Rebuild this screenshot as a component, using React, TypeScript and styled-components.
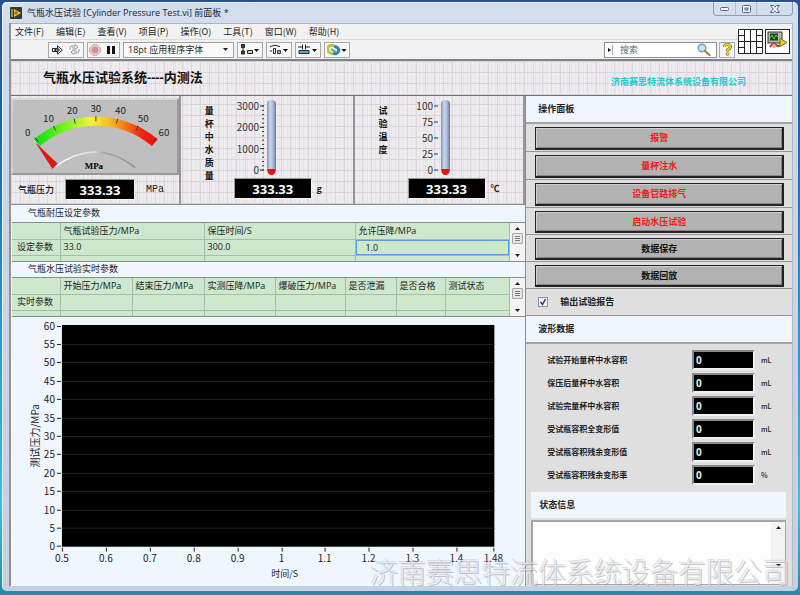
import React from "react";
import styled, { createGlobalStyle, css } from "styled-components";

const cjk = `"Noto Sans CJK SC", "Noto Sans", sans-serif`;
const latin = `"Open Sans", "Noto Sans CJK SC", sans-serif`;

const Global = createGlobalStyle`
  *, *::before, *::after { box-sizing: border-box; }
  body { margin: 0; font: 9px/12px ${cjk}; color: #222; }
  button, input, select, textarea { font: inherit; color: inherit; margin: 0; padding: 0; border-radius: 0; }
  svg { display: block; }
`;

const gridPaper = css`
  background-color: #efecef;
  background-image:
    repeating-linear-gradient(90deg, #dcd8dd 0 1px, transparent 1px 9px),
    repeating-linear-gradient(0deg, #d8d4d9 0 1px, transparent 1px 11px),
    repeating-linear-gradient(90deg, #e8e4e8 0 1px, transparent 1px 4px);
`;

const Desktop = styled.div`
  min-height: 100vh;
  display: flex;
  padding: 2px 2px 4px;
  background: linear-gradient(180deg, #2c4f8c 0, #1c63b4 20%, #2c9ad8 60%, #3fc0e0 85%, #2a86a8 100%);
`;

const Frame = styled.div`
  flex: 1;
  min-width: 0;
  display: flex;
  flex-direction: column;
  padding: 0 5px 5px 7px;
  border-radius: 5px;
  background: linear-gradient(180deg, #d3dfec 0, #cbd6e5 30%, #c5d0e0 100%);
  box-shadow: inset 1px 1px 0 #eef4fb;
`;

const TitleBar = styled.header`
  height: 21px;
  display: flex;
  align-items: center;
  gap: 5px;
  padding-left: 1px;
`;

const Title = styled.h1`
  margin: 0;
  flex: 1;
  font: 400 9px/20px ${latin};
  color: #1c2430;
`;

const WindowButtons = styled.div`
  align-self: flex-start;
  display: grid;
  grid-template-columns: 21px 21px 36px;
  height: 14px;
  border: 1px solid #8e9cb2;
  border-top: 0;
  border-radius: 0 0 4px 4px;
`;

const WindowButton = styled.button`
  display: flex;
  align-items: center;
  justify-content: center;
  border: 0;
  background: transparent;
  & + & { border-left: 1px solid #b4c0d2; }
`;

const Content = styled.div`
  flex: 1;
  display: flex;
  flex-direction: column;
  border-left: 2px solid #929298;
  border-right: 1px solid #b4bac4;
  background: #dedede;
`;

const Bars = styled.div`
  display: grid;
  grid-template-columns: 1fr auto;
  background: #f2f2f3;
  border-top: 1px solid #a8b4c4;
  border-bottom: 2px solid #828084;
`;

const BarRows = styled.div`
  display: grid;
  grid-template-rows: 16px 19px;
`;

const MenuBar = styled.nav`
  display: flex;
  gap: 12px;
  padding-left: 4px;
  border-bottom: 1px solid #dcdcdc;
`;

const MenuItem = styled.button`
  border: 0;
  background: transparent;
  line-height: 14px;
  white-space: nowrap;
`;

const Toolbar = styled.div`
  display: flex;
  align-items: center;
  gap: 3px;
  padding-left: 37px;
`;

const ToolGroup = styled.div`
  display: flex;
  height: 16px;
  border: 1px solid #a9a9ab;
  background: #f6f6f6;
`;

const Tool = styled.button<{ $w: number }>`
  width: ${(p) => p.$w}px;
  display: flex;
  align-items: center;
  justify-content: center;
  border: 0;
  background: transparent;
`;

const FontBox = styled.label`
  width: 111px;
  height: 16px;
  display: flex;
  align-items: center;
  border: 1px solid #a0a0a2;
  background: #fafafa;
  padding-right: 5px;
`;

const FontSelect = styled.select`
  appearance: none;
  flex: 1;
  min-width: 0;
  border: 0;
  background: transparent;
  padding-left: 4px;
  height: 14px;
  font: 400 9px/14px ${latin};
`;

const Search = styled.label`
  display: flex;
  align-items: center;
  width: 113px;
  height: 16px;
  margin-left: auto;
  padding: 0 5px 0 2px;
  gap: 4px;
  border: 1px solid #8e8e90;
  background: #fff;
`;

const SearchInput = styled.input`
  flex: 1;
  min-width: 0;
  height: 14px;
  border: 0;
  outline: 0;
  background: transparent;
  &::placeholder { color: #666; opacity: 1; }
`;

const Help = styled(ToolGroup)`
  margin-right: 3px;
  margin-left: -1px;
`;

const ViIcons = styled.div`
  display: flex;
  align-items: center;
  gap: 2px;
  padding-right: 2px;
`;

const Banner = styled.div`
  height: 35px;
  display: flex;
  align-items: center;
  justify-content: space-between;
  padding: 0 46px 2px 32px;
  border-bottom: 1px solid #707074;
  ${gridPaper}
`;

const BannerTitle = styled.h2`
  margin: 0;
  font: 700 13px/18px ${latin};
  color: #111;
`;

const Company = styled.span`
  margin-top: 10px;
  font-size: 9px;
  font-weight: 700;
  color: #1fc9cf;
`;

const Main = styled.main`
  flex: 1;
  display: grid;
  grid-template-columns: minmax(0, 515fr) minmax(0, 267fr);
`;

const Left = styled.div`
  display: flex;
  flex-direction: column;
  background: #f0f6fe;
`;

const Instruments = styled.div`
  height: 109px;
  display: grid;
  grid-template-columns: 170fr 174fr 171fr;
  border-bottom: 1px solid #8a8a8e;
  ${gridPaper}
`;

const Instrument = styled.section`
  display: flex;
  border-right: 2px solid #98969a;
`;

const GaugeColumn = styled.div`
  flex: 1;
  display: flex;
  flex-direction: column;
  padding-top: 2px;
`;

const GaugeFace = styled.div`
  height: 77px;
  background: #bfbfbf;
  border: 2px solid;
  border-color: #d8d8d8 #989898 #989898 #d0d0d0;
  & > svg { width: 100%; height: 100%; }
`;

const ReadoutRow = styled.div`
  display: flex;
  align-items: center;
  gap: 5px;
`;

const GaugeReadout = styled(ReadoutRow)`
  padding: 4px 0 0 7px;
  gap: 11px;
`;

const Readout = styled.input`
  width: 78px;
  height: 21px;
  border: 1px solid #9a9a9a;
  border-right-color: #f4f4f4;
  border-bottom-color: #f4f4f4;
  background: #000;
  color: #fff;
  font: 700 13px/18px ${latin};
  text-align: center;
`;

const NarrowReadout = styled(Readout)`
  width: 70px;
`;

const Caption = styled.label`
  font-weight: 500;
  color: #111;
`;

const MonoUnit = styled.span`
  font: 10px/12px "Liberation Mono", monospace;
`;

const Unit = styled.span`
  font: 700 9px/12px ${latin};
`;

const VerticalLabel = styled.h3`
  margin: 8px 0 0;
  width: 53px;
  padding: 0 19px 0 24px;
  font-size: 9px;
  line-height: 13px;
  font-weight: 700;
  color: #111;
  word-break: break-all;
`;

const ThermoColumn = styled.div`
  display: flex;
  flex-direction: column;
  padding-top: 2px;
`;

const SectionCaption = styled.h3<{ $h: number }>`
  margin: 0;
  height: ${(p) => p.$h}px;
  line-height: ${(p) => p.$h - 1}px;
  padding-left: 17px;
  font-size: 9px;
  font-weight: 400;
`;

const TableStrip = styled.div`
  display: grid;
  grid-template-columns: minmax(0, 1fr) 15px;
  height: 40px;
  margin-left: 1px;
  border-top: 1px solid #84908a;
  border-bottom: 1px solid #84908a;
`;

const Grid = styled.table`
  width: 100%;
  height: 38px;
  table-layout: fixed;
  border-collapse: collapse;
  background: #cde8cd;
  font: 400 9px/14px ${latin};
  th, td {
    padding: 0 0 0 3px;
    border: 1px solid #a3bda6;
    border-width: 0 1px 1px 0;
    font-weight: 400;
    text-align: left;
    white-space: nowrap;
    height: 16px;
  }
  tbody th { padding-left: 5px; }
  tbody tr:last-child > * { height: 6px; line-height: 5px; border-bottom: 0; }
`;

const CellInput = styled.input`
  display: block;
  width: calc(100% + 3px);
  margin-left: -3px;
  height: 15px;
  padding-left: 9px;
  border: 1px solid #5a9be0;
  outline: 0;
  background: transparent;
`;

const Scroll = styled.div`
  display: flex;
  flex-direction: column;
  align-items: center;
  justify-content: space-between;
  background: #f3f3f4;
  padding: 3px 0;
`;

const ScrollButton = styled.button`
  display: block;
  width: 11px;
  height: 5px;
  border: 0;
  background: transparent;
  & > svg { margin: auto; }
`;

const Thumb = styled.div`
  width: 11px;
  height: 11px;
  margin-bottom: 8px;
  border: 1px solid #a6a6aa;
  border-radius: 1px;
  background: repeating-linear-gradient(180deg, #eee 0 1px, #777 1px 2px) center / 5px 6px no-repeat, #e6e6e8;
`;

const Chart = styled.svg`
  width: 100%;
  height: auto;
  font-family: ${cjk};
  font-size: 10px;
  fill: #222;
`;

const Right = styled.div`
  display: flex;
  flex-direction: column;
  padding-bottom: 1px;
  border-left: 1px solid #8e8e92;
  background: #dfdfdf;
`;

const PanelTitle = styled.h3`
  margin: 0;
  height: 28px;
  padding-left: 12px;
  font-size: 9px;
  line-height: 26px;
  font-weight: 700;
  color: #222;
  background: #f0f6fe;
  border-bottom: 2px solid #a2a4a8;
`;

const Actions = styled.div`
  display: grid;
  grid-template-rows: repeat(3, 28px) repeat(3, 27px);
`;

const ActionRow = styled.div`
  padding: 3px 8px 1px 9px;
  display: flex;
  border-bottom: 1px solid #96969a;
`;

const ActionButton = styled.button<{ $alert?: boolean }>`
  flex: 1;
  border: 1px solid #222;
  border-right-width: 2px;
  border-bottom-width: 2px;
  box-shadow: inset 1px 1px 0 #cfcfcf, inset -1px -1px 0 #858585;
  background: #b2b2b2;
  font-size: 9px;
  font-weight: 700;
  line-height: 18px;
  color: ${(p) => (p.$alert ? "#f01818" : "#111")};
`;

const ReportRow = styled.label`
  height: 27px;
  display: flex;
  align-items: center;
  gap: 12px;
  padding-left: 12px;
  font-weight: 700;
  border-bottom: 1px solid #8e9096;
`;

const Check = styled.input`
  appearance: none;
  width: 10px;
  height: 10px;
  border: 1px solid #8c94a4;
  background: #eef1f8;
  & + svg { visibility: hidden; }
  &:checked + svg { visibility: visible; }
`;

const CheckHolder = styled.span`
  position: relative;
  display: flex;
  & > svg { position: absolute; inset: 0; pointer-events: none; }
`;

const DataList = styled.div`
  padding: 4px 0 5px 21px;
`;

const DataRow = styled.label`
  height: 23px;
  display: grid;
  grid-template-columns: minmax(0, 145fr) minmax(0, 63fr) 37px;
  align-items: center;
  font-size: 8px;
  font-weight: 700;
`;

const DataField = styled.input`
  min-width: 0;
  height: 20px;
  border: 2px solid;
  border-color: #8a8a8a #f2f2f2 #f2f2f2 #8a8a8a;
  padding-left: 2px;
  background: #000;
  color: #d8f4f0;
  font: 700 10px/16px ${latin};
`;

const DataUnit = styled.span`
  padding-left: 6px;
  font-size: 7px;
  font-weight: 500;
`;

const StatusTitle = styled(PanelTitle)`
  height: 26px;
  margin: 1px 6px 2px 5px;
  padding-left: 8px;
  border-bottom: 0;
`;

const Status = styled.div`
  flex: 1;
  min-height: 64px;
  display: grid;
  grid-template-columns: minmax(0, 1fr) 14px;
  margin: 0 6px 0 5px;
  border: 1px solid #a6a6a8;
  border-width: 2px 1px 1px 2px;
  background: #fdfdfd;
  & > :last-child { padding-bottom: 16px; }
`;

const StatusText = styled.textarea`
  height: 100%;
  border: 0;
  outline: 0;
  resize: none;
  background: transparent;
`;

const Watermark = styled.div`
  position: absolute;
  right: 10px;
  bottom: 7px;
  font-size: 28px;
  line-height: 34px;
  font-weight: 300;
  white-space: nowrap;
  color: rgba(236, 236, 240, 0.7);
  text-shadow: 1px 1px 0 rgba(130, 130, 138, 0.45), -1px -1px 0 rgba(180, 180, 188, 0.35);
  pointer-events: none;
`;

const Page = styled.div`
  position: relative;
`;

const Caret = ({ up }: { up?: boolean }) => (
  <svg width="5" height="3" viewBox="0 0 5 3">
    <path d={up ? "M0 3 2.5 0 5 3z" : "M0 0h5L2.5 3z"} fill="#222" />
  </svg>
);

const menus = ["文件(F)", "编辑(E)", "查看(V)", "项目(P)", "操作(O)", "工具(T)", "窗口(W)", "帮助(H)"];

const polar = (r: number, deg: number): [number, number] => {
  const a = ((deg - 90) * Math.PI) / 180;
  return [84 + r * Math.cos(a), 114 + r * Math.sin(a)];
};

const gaugeLabels: [string, number, number][] = [
  ["0", 15, 36], ["10", 36, 22], ["20", 60, 14], ["30", 84, 12], ["40", 109, 14], ["50", 132, 22], ["60", 153, 36],
];

function Gauge() {
  const [x0, y0] = polar(93, -40);
  const [x1, y1] = polar(93, 40);
  return (
    <svg viewBox="0 0 166 73" fontFamily={cjk} fontSize="10" fill="#222" role="img" aria-label="气瓶压力 333.33 MPa">
      <defs>
        <linearGradient id="scale" x1="0" x2="1" y1="0" y2="0">
          <stop offset="0" stopColor="#12e012" />
          <stop offset="0.25" stopColor="#7cf51c" />
          <stop offset="0.46" stopColor="#f8f03c" />
          <stop offset="0.6" stopColor="#f8c020" />
          <stop offset="0.75" stopColor="#f47a14" />
          <stop offset="0.88" stopColor="#f02a14" />
          <stop offset="1" stopColor="#ee1010" />
        </linearGradient>
        <linearGradient id="rim">
          <stop offset="0" stopColor="#fff" />
          <stop offset="0.5" stopColor="#dcdcdc" />
          <stop offset="0.6" stopColor="#a4a4a4" />
          <stop offset="1" stopColor="#8e8e8e" />
        </linearGradient>
      </defs>
      <path d={`M${x0} ${y0}A93 93 0 0 1 ${x1} ${y1}`} fill="none" stroke="url(#scale)" strokeWidth="9" />
      {[0, 1, 2, 3, 4, 5, 6].map((i) => {
        const a = -39 + 13 * i;
        const [ax, ay] = polar(98, a);
        const [bx, by] = polar(93, a);
        return <line key={i} x1={ax} y1={ay} x2={bx} y2={by} stroke="#333" />;
      })}
      {gaugeLabels.map(([t, x, y]) => (
        <text key={t} x={x} y={y} textAnchor="middle">{t}</text>
      ))}
      <path d="M43 67Q84 37 124 68" fill="none" stroke="url(#rim)" strokeWidth="1.5" />
      <path d="M24 44 45 64 40 69z" fill="#e81414" stroke="#b81818" strokeWidth="0.5" />
      <text x="82" y="69" textAnchor="middle" fontFamily="Liberation Serif, serif" fontWeight="700" fontSize="9" fill="#000">MPa</text>
    </svg>
  );
}

interface ThermoProps {
  id: string;
  labels: string[];
  minor: number;
}

function Thermometer({ id, labels, minor }: ThermoProps) {
  const top = 8;
  const step = 64 / (labels.length - 1);
  const ticks = minor ? Array.from({ length: minor + 1 }, (_, i) => top + (64 * i) / minor) : [];
  return (
    <svg width="60" height="80" viewBox="0 0 60 80" fontFamily={cjk} fontSize="10" fill="#333" role="img" aria-label={id}>
      <defs>
        <linearGradient id={id}>
          <stop offset="0" stopColor="#7f93b4" />
          <stop offset="0.35" stopColor="#c9d8f0" />
          <stop offset="0.7" stopColor="#a5b6d4" />
          <stop offset="1" stopColor="#66748e" />
        </linearGradient>
      </defs>
      {ticks.map((y) => <line key={y} x1="28" x2="30" y1={y} y2={y} stroke="#333" />)}
      {labels.map((t, i) => (
        <g key={t}>
          <text x="25" y={top + step * i + 4} textAnchor="end">{t}</text>
          <line x1="26" x2="30" y1={top + step * i} y2={top + step * i} stroke="#333" />
        </g>
      ))}
      <rect x="33" y="2" width="9" height="71" rx="4" fill={`url(#${id})`} />
      <path d="M33 71h9q-.5 6-4.500 6t-4.500-6z" fill="#dc1616" />
    </svg>
  );
}

function PressureChart() {
  const xs: [string, number][] = [
    ["0.5", 51], ["0.6", 95], ["0.7", 139], ["0.8", 183], ["0.9", 227], ["1", 271], ["1.1", 314], ["1.2", 358], ["1.3", 402], ["1.4", 446], ["1.48", 483],
  ];
  return (
    <Chart viewBox="0 0 515 268" role="img" aria-label="测试压力曲线">
      <rect x="51" y="8" width="433" height="222" fill="#000" />
      {Array.from({ length: 13 }, (_, i) => {
        const y = Math.round(8.5 + i * 18.4) + 0.5;
        return (
          <g key={i}>
            {i > 0 && i < 12 && <line x1="51" x2="484" y1={y} y2={y} stroke="#1f261f" />}
            <line x1="46" x2="50" y1={y} y2={y} stroke="#222" />
            <text x="44" y={y + 4} textAnchor="end">{60 - i * 5}</text>
          </g>
        );
      })}
      {xs.map(([t, x]) => (
        <g key={t}>
          <line x1={x + 0.5} x2={x + 0.5} y1="231" y2="235" stroke="#222" />
          <text x={x} y="245" textAnchor="middle">{t}</text>
        </g>
      ))}
      <text x="274" y="260" textAnchor="middle" fontSize="9">时间/S</text>
      <text transform="translate(28 119) rotate(-90)" textAnchor="middle">测试压力/MPa</text>
    </Chart>
  );
}

function ScrollBar({ thumb }: { thumb?: boolean }) {
  return (
    <Scroll>
      <ScrollButton aria-label="向上"><Caret up /></ScrollButton>
      {thumb && <Thumb />}
      <ScrollButton aria-label="向下"><Caret /></ScrollButton>
    </Scroll>
  );
}

const actions: [string, boolean][] = [
  ["报警", true], ["量杯注水", true], ["设备管路排气", true], ["启动水压试验", true], ["数据保存", false], ["数据回放", false],
];

const data: [string, string][] = [
  ["试验开始量杯中水容积", "mL"], ["保压后量杯中水容积", "mL"], ["试验完量杯中水容积", "mL"],
  ["受试瓶容积全变形值", "mL"], ["受试瓶容积残余变形值", "mL"], ["受试瓶容积残余变形率", "%"],
];

const liveHeads = ["开始压力/MPa", "结束压力/MPa", "实测压降/MPa", "爆破压力/MPa", "是否泄漏", "是否合格", "测试状态"];

export default function App() {
  return (
    <Page>
      <Global />
      <Desktop>
        <Frame>
          <TitleBar>
            <svg width="12" height="12" viewBox="0 0 12 12">
              <rect width="12" height="12" rx="1" fill="#333a30" />
              <path d="M1 2h2v8H1z" fill="#8a8f70" />
              <path d="M4 2l7 4-7 4z" fill="#f2c81c" />
              <path d="M4 6h4M6 4v4" stroke="#a0461c" />
            </svg>
            <Title>气瓶水压试验 [Cylinder Pressure Test.vi] 前面板 *</Title>
            <WindowButtons>
              <WindowButton aria-label="最小化">
                <svg width="9" height="4" viewBox="0 0 9 4"><rect x=".5" y=".5" width="8" height="3" rx="1" fill="#fff" stroke="#56657c" /></svg>
              </WindowButton>
              <WindowButton aria-label="最大化">
                <svg width="9" height="8" viewBox="0 0 9 8"><rect x=".5" y=".5" width="8" height="7" rx="1" fill="#fff" stroke="#56657c" /><rect x="3" y="3" width="3" height="2" fill="#cbd6e5" stroke="#56657c" /></svg>
              </WindowButton>
              <WindowButton aria-label="关闭">
                <svg width="10" height="8" viewBox="0 0 10 8"><path d="M.5.500h3L5 2.300 6.500.5h3L6.800 4l2.700 3.500h-3L5 5.700 3.500 7.500h-3L3.200 4z" fill="#fff" stroke="#56657c" /></svg>
              </WindowButton>
            </WindowButtons>
          </TitleBar>
          <Content>
            <Bars>
              <BarRows>
                <MenuBar>{menus.map((m) => <MenuItem key={m}>{m}</MenuItem>)}</MenuBar>
                <Toolbar>
                  <ToolGroup>
                    <Tool $w={17} aria-label="运行">
                      <svg width="11" height="10" viewBox="0 0 11 10"><path d="M.5 3.500h5V.8L10.300 5 5.500 9.200V6.500h-5z" fill="#fff" stroke="#222" /><path d="M2 5h6M6 3v4M3.500 3v4" stroke="#222" /></svg>
                    </Tool>
                    <Tool $w={17} aria-label="连续运行">
                      <svg width="11" height="11" viewBox="0 0 11 11" fill="none" stroke="#999"><path d="M1 6V4q0-2 2-2h3V.5L9 3 6 5.500V4H3M10 5v2q0 2-2 2H5v1.500L2 8l3-2.500V7h3" /></svg>
                    </Tool>
                  </ToolGroup>
                  <ToolGroup>
                    <Tool $w={14} aria-label="中止">
                      <svg width="12" height="12" viewBox="0 0 12 12"><path d="M4 .7h4L11.300 4v4L8 11.300H4L.7 8V4z" fill="#f0d4d6" stroke="#c9a0a4" /><circle cx="6" cy="6" r="3.500" fill="#dc8c94" /></svg>
                    </Tool>
                    <Tool $w={17} aria-label="暂停">
                      <svg width="8" height="8" viewBox="0 0 8 8"><path d="M0 0h3v8H0zM5 0h3v8H5z" fill="#111" /></svg>
                    </Tool>
                  </ToolGroup>
                  <FontBox>
                    <FontSelect aria-label="字体" defaultValue="18pt 应用程序字体"><option>18pt 应用程序字体</option></FontSelect>
                    <Caret />
                  </FontBox>
                  <ToolGroup>
                    <Tool $w={24} aria-label="对齐对象">
                      <svg width="20" height="11" viewBox="0 0 20 11"><path d="M1.500.5h3v3h-3zM1.500 7h3v3h-3z" fill="#444" stroke="#222" /><path d="M7.500 6.500h5v3h-5z" fill="#c8d888" stroke="#222" /><path d="M3 4v3" stroke="#222" /><path d="M14 5h5l-2.500 3z" fill="#111" /></svg>
                    </Tool>
                  </ToolGroup>
                  <ToolGroup>
                    <Tool $w={24} aria-label="分布对象">
                      <svg width="20" height="11" viewBox="0 0 20 11"><path d="M1 2.500Q6 0 11 2.500M1 7h2" stroke="#222" fill="none" /><path d="M4.500 4.500h2v5h-2z" fill="#fff" stroke="#222" /><path d="M8.500 6.500h3v3h-3z" fill="#6ec8c0" stroke="#335" /><path d="M14 5h5l-2.500 3z" fill="#111" /></svg>
                    </Tool>
                  </ToolGroup>
                  <ToolGroup>
                    <Tool $w={24} aria-label="调整对象大小">
                      <svg width="20" height="11" viewBox="0 0 20 11"><path d="M0 3h4M8 3h4M4.500.5v5M7.500.5v5" stroke="#222" /><path d="M1 6.500h10v3H1z" fill="#58a4d0" stroke="#234" /><path d="M14 5h5l-2.500 3z" fill="#111" /></svg>
                    </Tool>
                  </ToolGroup>
                  <ToolGroup>
                    <Tool $w={24} aria-label="重新排序">
                      <svg width="20" height="12" viewBox="0 0 20 12" fill="none"><path d="M7 2a4 4 0 1 0-1 7" stroke="#c8c428" strokeWidth="3" /><path d="M7 3a3.500 3.500 0 1 1-1 6" stroke="#2a86b8" strokeWidth="3" /><path d="M4 5l5 3" stroke="#3fae8c" strokeWidth="2" /><path d="M14.500 5h5L17 8z" fill="#111" /></svg>
                    </Tool>
                  </ToolGroup>
                  <Search>
                    <svg width="9" height="10" viewBox="0 0 9 10"><path d="M1 3l3 2-3 2z" fill="#111" /><path d="M5.500 0v10" stroke="#aaa" /></svg>
                    <SearchInput placeholder="搜索" aria-label="搜索" />
                    <svg width="14" height="13" viewBox="0 0 14 13"><circle cx="5" cy="5" r="3.800" fill="#c4e6f8" stroke="#6ea4c8" strokeWidth="1.500" /><path d="M8 8l4.500 4" stroke="#a87848" strokeWidth="2" strokeLinecap="round" /></svg>
                  </Search>
                  <Help>
                    <Tool $w={14} aria-label="帮助">
                      <svg width="9" height="13" viewBox="0 0 9 13"><path d="M1.500 4q0-2.500 3-2.500t3 2.300Q7.500 5.500 4.500 7v1.500" fill="none" stroke="#6c6420" strokeWidth="3" /><path d="M1.500 4q0-2.500 3-2.500t3 2.300Q7.500 5.500 4.500 7v1.500" fill="none" stroke="#ecdc28" strokeWidth="1.800" /><circle cx="4.500" cy="11" r="1.500" fill="#ecdc28" stroke="#6c6420" strokeWidth=".6" /></svg>
                    </Tool>
                  </Help>
                </Toolbar>
              </BarRows>
              <ViIcons>
                <svg width="25" height="25" viewBox="0 0 25 25" fill="#fff" stroke="#222"><path d="M.5.500h24v24H.5zM6.500.5v24M12.500.5v24M18.500.5v24M.5 6.500h6M.5 12.500h24M.5 18.500h6M18.500 6.500h6M18.500 18.500h6" /></svg>
                <svg width="25" height="25" viewBox="0 0 25 25"><rect x=".5" y=".5" width="24" height="24" fill="#fff" stroke="#222" /><rect x="3" y="3" width="14" height="11" fill="#b8b8a8" stroke="#333" /><rect x="5" y="4.500" width="8" height="7" fill="#0c4a20" /><path d="M5 9l2-3 2 4 2-4 2 2" stroke="#4cd468" fill="none" /><path d="M5 18q3-5 6-2t6-2" stroke="#b83c2c" strokeWidth="2" fill="none" /><path d="M15 9.500l7 4-7 4z" fill="#ecd424" stroke="#7c7418" /><circle cx="9" cy="17" r="2" fill="#e8a890" /></svg>
              </ViIcons>
            </Bars>
            <Banner>
              <BannerTitle>气瓶水压试验系统----内测法</BannerTitle>
              <Company>济南赛思特流体系统设备有限公司</Company>
            </Banner>
            <Main>
              <Left>
                <Instruments>
                  <Instrument>
                    <GaugeColumn>
                      <GaugeFace><Gauge /></GaugeFace>
                      <GaugeReadout>
                        <Caption htmlFor="pressure">气瓶压力</Caption>
                        <NarrowReadout id="pressure" readOnly value="333.33" />
                        <MonoUnit>MPa</MonoUnit>
                      </GaugeReadout>
                    </GaugeColumn>
                  </Instrument>
                  <Instrument>
                    <VerticalLabel>量杯中水质量</VerticalLabel>
                    <ThermoColumn>
                      <Thermometer id="mass" labels={["3000", "2000", "1000", "0"]} minor={15} />
                      <ReadoutRow><Readout aria-label="量杯中水质量" readOnly value="333.33" /><Unit>g</Unit></ReadoutRow>
                    </ThermoColumn>
                  </Instrument>
                  <Instrument>
                    <VerticalLabel>试验温度</VerticalLabel>
                    <ThermoColumn>
                      <Thermometer id="temp" labels={["100", "75", "50", "25", "0"]} minor={0} />
                      <ReadoutRow><Readout aria-label="试验温度" readOnly value="333.33" /><Unit>℃</Unit></ReadoutRow>
                    </ThermoColumn>
                  </Instrument>
                </Instruments>
                <SectionCaption $h={17}>气瓶耐压设定参数</SectionCaption>
                <TableStrip>
                  <Grid>
                    <colgroup><col width="48" /><col width="144" /><col width="151" /><col /></colgroup>
                    <thead><tr><th /><th>气瓶试验压力/MPa</th><th>保压时间/S</th><th>允许压降/MPa</th></tr></thead>
                    <tbody>
                      <tr><th>设定参数</th><td>33.0</td><td>300.0</td><td><CellInput aria-label="允许压降" defaultValue="1.0" /></td></tr>
                      <tr><td /><td /><td /><td /></tr>
                    </tbody>
                  </Grid>
                  <ScrollBar thumb />
                </TableStrip>
                <SectionCaption $h={15}>气瓶水压试验实时参数</SectionCaption>
                <TableStrip>
                  <Grid>
                    <colgroup><col width="48" /><col width="72" /><col width="72" /><col width="71" /><col width="70" /><col width="51" /><col width="49" /><col /></colgroup>
                    <thead><tr><th />{liveHeads.map((h) => <th key={h}>{h}</th>)}</tr></thead>
                    <tbody>
                      <tr><th>实时参数</th>{liveHeads.map((h) => <td key={h} />)}</tr>
                      <tr><td />{liveHeads.map((h) => <td key={h} />)}</tr>
                    </tbody>
                  </Grid>
                  <ScrollBar thumb />
                </TableStrip>
                <PressureChart />
              </Left>
              <Right>
                <PanelTitle>操作面板</PanelTitle>
                <Actions>
                  {actions.map(([t, a]) => <ActionRow key={t}><ActionButton $alert={a}>{t}</ActionButton></ActionRow>)}
                </Actions>
                <ReportRow>
                  <CheckHolder>
                    <Check type="checkbox" defaultChecked />
                    <svg width="10" height="10" viewBox="0 0 10 10"><path d="M2.500 5l2 2.500L7.500 2" fill="none" stroke="#2c3a78" strokeWidth="1.500" /></svg>
                  </CheckHolder>
                  输出试验报告
                </ReportRow>
                <PanelTitle>波形数据</PanelTitle>
                <DataList>
                  {data.map(([t, u]) => (
                    <DataRow key={t}>
                      <span>{t}</span>
                      <DataField readOnly value="0" />
                      <DataUnit>{u}</DataUnit>
                    </DataRow>
                  ))}
                </DataList>
                <StatusTitle>状态信息</StatusTitle>
                <Status>
                  <StatusText aria-label="状态信息" />
                  <ScrollBar />
                </Status>
              </Right>
            </Main>
          </Content>
        </Frame>
      </Desktop>
      <Watermark>济南赛思特流体系统设备有限公司</Watermark>
    </Page>
  );
}
